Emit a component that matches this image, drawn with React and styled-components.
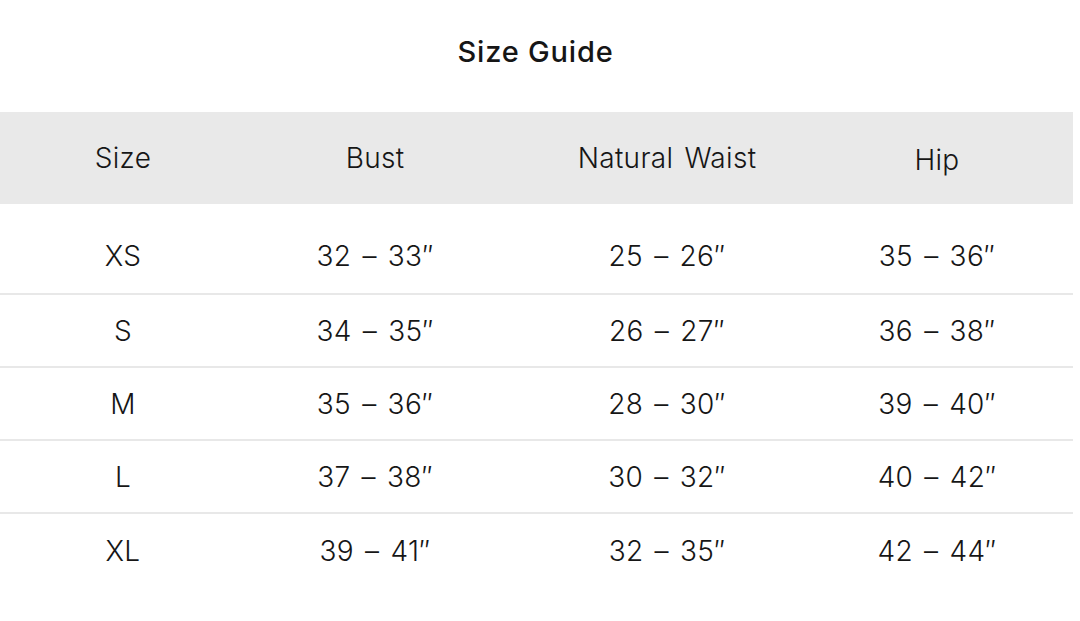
import styled, { createGlobalStyle } from "styled-components";

const GlobalStyle = createGlobalStyle`
  body {
    margin: 0;
    background: #fff;
    font-family: Inter, "Noto Sans", sans-serif;
    color: #161616;
  }
`;

const Page = styled.div`
  width: 1073px;
  padding-top: 32px;
`;

const Title = styled.h2`
  margin: 0;
  text-align: center;
  font-size: 29px;
  font-weight: 500;
  line-height: 40px;
  letter-spacing: 0.8px;
  padding-right: 2px;
`;

const Table = styled.div`
  width: 1073px;
  margin-top: 40px;
`;

const Row = styled.div`
  box-sizing: border-box;
  display: grid;
  grid-template-columns: 246px 258px 326px 214px;
  align-items: center;
  height: ${(p) => p.$height}px;
  background: ${(p) => (p.$head ? "#e9e9e9" : "transparent")};
  border-bottom: ${(p) => (p.$last || p.$head ? "none" : "2px solid #e8e8e8")};
`;

const Cell = styled.div`
  text-align: center;
  font-size: 28px;
  font-weight: 300;
  letter-spacing: 0.3px;
  word-spacing: 3px;
  padding-top: ${(p) => p.$offset || 0}px;
`;

const columns = ["Size", "Bust", "Natural Waist", "Hip"];

const rows = [
  ["XS", "32 – 33″", "25 – 26″", "35 – 36″"],
  ["S", "34 – 35″", "26 – 27″", "36 – 38″"],
  ["M", "35 – 36″", "28 – 30″", "39 – 40″"],
  ["L", "37 – 38″", "30 – 32″", "40 – 42″"],
  ["XL", "39 – 41″", "32 – 35″", "42 – 44″"],
];

export default function App() {
  return (
    <Page>
      <GlobalStyle />
      <Title>Size Guide</Title>
      <Table>
        <Row $head $height={92}>
          {columns.map((c, i) => (
            <Cell key={c} $offset={i === 3 ? 4 : 0}>
              {c}
            </Cell>
          ))}
        </Row>
        {rows.map((r, i) => (
          <Row
            key={r[0]}
            $height={i === 0 ? 91 : 73}
            $last={i === rows.length - 1}
          >
            {r.map((v, j) => (
              <Cell key={j} $offset={i === 0 ? 14 : 0}>
                {v}
              </Cell>
            ))}
          </Row>
        ))}
      </Table>
    </Page>
  );
}
